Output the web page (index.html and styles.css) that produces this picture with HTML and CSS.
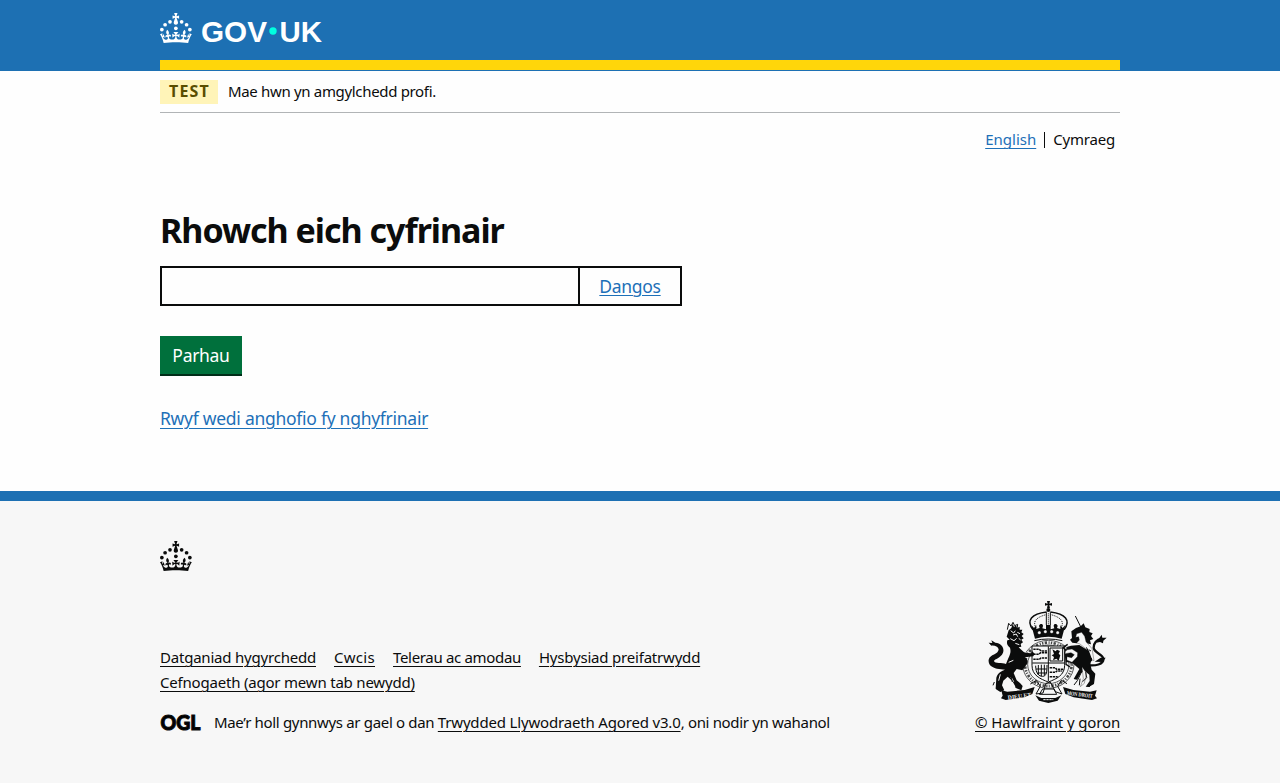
FILE: index.html
```html
<!DOCTYPE html>
<html lang="cy">
<head>
<meta charset="utf-8">
<title>Rhowch eich cyfrinair</title>
<link rel="stylesheet" href="styles.css">
</head>
<body>
<svg class="defs" width="0" height="0" aria-hidden="true">
  <symbol id="crown" viewBox="0 0 64 60">
    <circle cx="20" cy="17.6" r="3.7"/><circle cx="10.2" cy="23.5" r="3.7"/><circle cx="3.7" cy="33.2" r="3.7"/><circle cx="31.7" cy="30.6" r="3.7"/><circle cx="43.3" cy="17.6" r="3.7"/><circle cx="53.2" cy="23.5" r="3.7"/><circle cx="59.7" cy="33.2" r="3.7"/>
    <path d="M33.1,9.8c.2-.1.3-.3.5-.5l4.6,2.4v-6.8l-4.6,1.5c-.1-.2-.3-.3-.5-.5l1.9-5.9h-6.7l1.9,5.9c-.2.1-.3.3-.5.5l-4.6-1.5v6.8l4.6-2.4c.1.2.3.3.5.5l-2.6,8c-.9,2.8,1.2,5.7,4.1,5.7h0c3,0,5.1-2.9,4.1-5.7l-2.6-8ZM37,37.9s-3.4,3.8-4.1,6.1c2.2,0,4.2-.5,6.4-2.8l-.7,8.5c-2-2.8-4.4-4.1-5.7-3.8.1,3.1.5,6.7,5.8,7.2,3.7.3,6.7-1.5,7-3.8.4-2.6-2-4.3-3.7-1.6-1.4-4.5,2.4-6.1,4.9-3.2-1.9-4.5-1.8-7.7,2.4-10.9,3,4,2.6,7.3-1.2,11.1,2.4-1.3,6.2,0,4,4.6-1.2-2.8-3.7-2.2-4.2.2-.3,1.7.7,3.7,3,4.2,1.9.3,4.7-.9,7-5.9-1.3,0-2.4.7-3.9,1.7l2.4-8c.6,2.3,1.4,3.7,2.2,4.5.6-1.6.5-2.8,0-5.3l5,1.8c-2.6,3.6-5.2,8.7-7.3,17.5-7.4-1.1-15.7-1.7-24.5-1.7h0c-8.8,0-17.1.6-24.5,1.7-2.1-8.9-4.7-13.9-7.3-17.5l5-1.8c-.5,2.5-.6,3.7,0,5.3.8-.8,1.6-2.3,2.2-4.5l2.4,8c-1.5-1-2.6-1.7-3.9-1.7,2.3,5,5.2,6.2,7,5.9,2.3-.4,3.3-2.4,3-4.2-.5-2.4-3-3.1-4.2-.2-2.2-4.6,1.6-6,4-4.6-3.7-3.7-4.2-7.1-1.2-11.1,4.2,3.2,4.3,6.4,2.4,10.9,2.5-2.8,6.3-1.3,4.9,3.2-1.8-2.7-4.1-1-3.7,1.6.3,2.3,3.3,4.1,7,3.8,5.4-.5,5.7-4.2,5.8-7.2-1.3-.2-3.7,1-5.7,3.8l-.7-8.5c2.2,2.3,4.2,2.7,6.4,2.8-.7-2.3-4.1-6.1-4.1-6.1h10.6Z"/>
  </symbol>
</svg>

<header class="header">
  <div class="container header-bar">
    <svg class="logo" viewBox="0 0 162 30" role="img" aria-label="GOV.UK">
      <use href="#crown" width="32" height="30"/>
      <text class="logo-text" x="41" y="28.7" textLength="66" lengthAdjust="spacingAndGlyphs">GOV</text>
      <circle class="logo-dot" cx="113" cy="18" r="3.7"/>
      <text class="logo-text" x="119.5" y="28.7" textLength="42.5" lengthAdjust="spacingAndGlyphs">UK</text>
    </svg>
  </div>
</header>

<div class="page">
  <div class="container">
    <div class="phase">
      <strong class="tag">TEST</strong>
      <span class="phase-text">Mae hwn yn amgylchedd profi.</span>
    </div>
    <nav class="languages">
      <a class="link lang-en" href="#">English</a>
      <span class="lang-cy">Cymraeg</span>
    </nav>
    <main class="main">
      <h1 class="title"><label for="password">Rhowch eich cyfrinair</label></h1>
      <div class="password">
        <input class="password-input" id="password" type="password">
        <button class="password-show" type="button">Dangos</button>
      </div>
      <button class="submit" type="submit">Parhau</button>
      <p class="forgot"><a class="link" href="#">Rwyf wedi anghofio fy nghyfrinair</a></p>
    </main>
  </div>
</div>

<footer class="footer">
  <div class="container">
    <svg class="footer-crown" viewBox="0 0 32 30"><use href="#crown" width="32" height="30"/></svg>
    <div class="footer-meta">
      <div class="footer-left">
        <ul class="footer-links">
          <li><a class="flink f1" href="#">Datganiad hygyrchedd</a></li>
          <li><a class="flink f2" href="#">Cwcis</a></li>
          <li><a class="flink f3" href="#">Telerau ac amodau</a></li>
          <li><a class="flink f4" href="#">Hysbysiad preifatrwydd</a></li>
          <li><a class="flink f5" href="#">Cefnogaeth (agor mewn tab newydd)</a></li>
        </ul>
        <div class="licence">
          <svg class="ogl" viewBox="0 0 41 17"><text class="ogl-text" x="0.5" y="16" textLength="40" lengthAdjust="spacingAndGlyphs">OGL</text></svg>
          <span class="licence-text">Mae’r holl gynnwys ar gael o dan <a class="flink licence-link" href="#">Trwydded Llywodraeth Agored v3.0</a>, oni nodir yn wahanol</span>
        </div>
      </div>
      <div class="copyright">
        <svg class="crest" viewBox="-15 18 435 306" aria-hidden="true">
          <!-- royal crown -->
          <path d="M201 18h9l-2 8 8-2v8l-8-2 2 10h-9l2-10-8 2v-8l8 2z"/>
          <circle cx="205" cy="45" r="6"/>
          <path class="line w5" d="M159 104C137 76 155 56 200 51M252 104C274 76 256 56 211 51"/>
          <path class="line w3 dots" d="M168 98C156 78 172 66 198 59M243 98C255 78 239 66 213 59"/>
          <path class="line w3" d="M199 52v38M211 52v38"/>
          <path class="line w3 dots" d="M205 55v35"/>
          <path d="M154 90l8 9 7-8v11l10-3-2-6c2-8 12-8 12 0l-2 7 11 3v-13h14v13l11-3-2-7c0-8 10-8 12 0l-2 6 10 3v-11l7 8 8-9-11 41q-40-11-80 0z"/>
          <g class="pale"><circle cx="178" cy="113" r="5"/><circle cx="196" cy="110" r="5"/><circle cx="215" cy="110" r="5"/><circle cx="233" cy="113" r="5"/></g>
          <path class="line w3" d="M163 137q42-10 84 0"/>
          <!-- garter and shield -->
          <ellipse class="line w2" cx="205" cy="208" rx="77" ry="72"/>
          <ellipse class="line w7 garter" cx="205" cy="208" rx="70" ry="65"/>
          <ellipse class="line w2" cx="205" cy="208" rx="62" ry="58"/>
          <path class="shield" d="M156 153h98v58c0 30-25 41-49 50-24-9-49-20-49-50z"/>
          <path class="line w3" d="M205 154v104M157 204h96"/>
          <path class="line w5 rough" d="M160 163h18l5 5h19M160 178h16l6-5h20M160 193h18l5-4h18M209 218h16l5 5h20M209 232h17l5-4h16M209 245h24"/>
          <path class="line w3" d="M210 159h38v39h-38z"/>
          <path d="M217 163l10 6 4-5 9 4-4 8 5 5-5 16-7-6-10 5 3-10-7-5 7-4z"/>
          <path class="line w3" d="M167 212c0 24 10 32 21 32s13-12 13-34M175 210v30M184 209v35M193 209v32M168 222h32M172 234h28"/>
          <!-- lion -->
          <path d="M86 106l8-7 4-13 4 10 6-5 3 8 8-4v9l8 0-3 8 7 5-6 6 6 7-7 4 5 8-7 5 2 8-8 2c8 6 12 15 22 17l16 1 2-7 8 8-4 8-26 3c9 5 11 12 7 20l-14 19-17-4-9 12 9 22 10 8 8 9-4 13-15-6-12-22-14-13-13 12-4 14 7 15-12 5-14-9 2-34c4-16 17-20 26-24l-24-3c-16-3-27-12-25-27 4-17 29-14 30-31-3-9-11-12-22-11l-8-9 11 1-3-8 12 7c18 2 28 15 23 30-7 17-25 18-27 25 2 9 25 4 36 9 8-23 17-31 12-49-8-5-11-13-8-22l7-2-9-9z"/>
          <g class="line pale-line w3"><path d="M92 107l9 7 5-7M99 120l10-3 4 8M91 131l11 6 8-7M112 112l8 4M116 130l6 5M106 145l12 4M86 202l14-6M62 195l20-3M93 246l8 14M61 238l-5 19"/></g>
          <path class="line w3" d="M82 104l4-19 7 8 6-11 5 10 9-4-2 13M43 261l-4 10M52 264l-3 13M111 265l-4 13M92 235l5 26"/>
          <!-- unicorn -->
          <path class="line w3" d="M286 63l18 36"/>
          <path d="M274 109l14-10 14-5 9-9 5 12 13 5-1 9 10 4-5 8 7 9-10 4 3 12-14-3 4 11-11-6-9-13-13 8-13-2-7-9 6-5z"/>
          <path class="pale" d="M290 116l15-4 9 12 4 16 18 21 6 36-14-7-7-26-21-17-10-3 8-9-2-10-9 2z"/>
          <path d="M273 152l25-2 29 18 10 28-7 7 5 21 11 12-4 31-16 9-9-1 12-17-1-19-14-11-11 6-12 20-10-2 17-30-20-17-21-5-4-28 9-17z"/>
          <path class="pale" d="M257 165l-2 11 18-3 10 6-8 9-14-3-1 10 16 7 16-17 1-12-17-11zM306 215l13 19-6 31-12 10 9-24z"/>
          <path class="line w4" d="M263 148l-14 10 10 9M259 185l-1 23 12 8"/>
          <path class="line w6" d="M328 211c15 1 44-1 42-20-3-16-28-16-29-33 0-14 10-24 25-28"/>
          <path d="M358 129l7-10 2 9 13 0-10 9-1 8-9-4-11 2zM344 200l18-12 15 0-9 13z"/>
          <path class="line w3" d="M319 157l7 13-3 15 8 15-4 19-10 13 3 16-12 12M326 164l7 4M329 188l7 3"/>
          <path class="line w3" d="M305 230l-13 27-10 13M342 239l-6 25-9 12M300 251l-2 20"/>
          <!-- motto -->
          <path d="M64 286l18 4 52-5 30-9-7 21-24 10-56 8-14-5 5-8zM350 286l-20 4-50-5-31-9 7 21 25 10 55 8 15-5-6-8z"/>
          <path class="line w3" d="M151 267l18-11 12 18-13 23 21-3 9-29 13-4 15 29 20 7-13-23 11-18 17 10M178 298h52l-8-16h-34z"/>
          <path d="M166 301l18 8h42l18-8-11 16-28 7-28-7z"/>
          <g class="motto"><text x="83" y="309" textLength="70" transform="rotate(-7 120 302)">DIEU ET</text><text x="260" y="304" textLength="78" lengthAdjust="spacingAndGlyphs" transform="rotate(7 298 302)">MON DROIT</text></g>
          <path class="line pale-line w3 rough" d="M190 314h30"/>
        </svg>
        <a class="flink copy-link" href="#">© Hawlfraint y goron</a>
      </div>
    </div>
  </div>
</footer>
</body>
</html>
```
FILE: styles.css
```css
* { box-sizing: border-box; }
body {
  margin: 0;
  background: #f7f7f7;
  color: #0b0c0c;
  font-family: "Noto Sans", "Open Sans", sans-serif;
  font-size: 15px;
  line-height: 20px;
  letter-spacing: -0.33px;
}
.defs { display: block; }
.container { width: 960px; margin: 0 auto; }

.header { height: 71px; background: #1d70b3; }
.header-bar { height: 70px; padding-top: 13px; border-bottom: 10px solid #ffd60a; }
.logo { display: block; width: 162px; height: 30px; fill: #fff; overflow: visible; }
.logo-text { font: bold 30px "Liberation Sans", Arial, sans-serif; letter-spacing: 0; }
.logo-dot { fill: #00ffe0; }

.page { height: 420px; background: #fefefe; }
.phase {
  display: flex;
  align-items: center;
  height: 42px;
  border-bottom: 1px solid #b1b4b6;
}
.tag {
  width: 58px;
  height: 24px;
  margin-right: 10px;
  padding-left: 1px;
  background: #fff4b8;
  color: #594d00;
  font-size: 16px;
  line-height: 23px;
  text-align: center;
  letter-spacing: 1.2px;
}
.phase-text { padding-bottom: 2px; }
.languages { display: flex; justify-content: flex-end; height: 20px; margin-top: 16px; padding-right: 5px; line-height: 20px; }
.link { color: #1d70b8; text-decoration: underline; text-decoration-thickness: 1px; text-underline-offset: 3px; }
.lang-en { letter-spacing: 0; }
.lang-cy { height: 16px; margin: 3px 0 0 8px; padding-left: 8px; border-left: 1px solid #0b0c0c; line-height: 14px; letter-spacing: -0.2px; }

.main { padding-top: 61px; }
.title { margin: 0; font-size: 34px; line-height: 40px; letter-spacing: -1px; }
.password { display: flex; width: 522px; height: 40px; margin-top: 16px; }
.password-input { width: 420px; border: 2px solid #0b0c0c; background: #fefefe; }
.password-show {
  width: 104px;
  margin-left: -2px;
  padding: 0;
  border: 2px solid #0b0c0c;
  background: #fefefe;
  color: #1d70b8;
  font: inherit;
  font-size: 17.5px;
  letter-spacing: -0.3px;
  text-decoration: underline;
  text-decoration-thickness: 1px;
  text-underline-offset: 2px;
}
.submit {
  display: block;
  width: 82px;
  height: 40px;
  margin-top: 30px;
  padding: 0;
  border: 0;
  border-bottom: 2px solid #002d18;
  background: #00703c;
  color: #fff;
  font: inherit;
  font-size: 17.5px;
  letter-spacing: -0.3px;
}
.forgot { margin: 30px 0 0; font-size: 17.5px; line-height: 25px; letter-spacing: -0.27px; }

.footer { height: 292px; border-top: 10px solid #1d70b3; background: #f7f7f7; }
.footer .container { padding-top: 40px; }
.footer-crown { display: block; width: 32px; height: 30px; fill: #0b0c0c; }
.footer-meta { display: flex; justify-content: space-between; align-items: flex-end; margin-top: 30px; }
.footer-links { display: flex; flex-wrap: wrap; column-gap: 18px; width: 640px; margin: 0 0 15px; padding: 0; list-style: none; line-height: 25px; }
.flink { color: inherit; text-decoration: underline; text-decoration-thickness: 1px; text-underline-offset: 3px; }
.f1 { letter-spacing: -0.21px; }
.f2 { letter-spacing: 0.3px; }
.f4 { letter-spacing: -0.2px; }
.f5 { letter-spacing: -0.2px; }
.licence-link { letter-spacing: -0.17px; }
.licence { display: flex; align-items: center; line-height: 25px; white-space: nowrap; }
.ogl { width: 41px; height: 17px; margin-right: 13px; overflow: visible; }
.ogl-text { font: 900 21.5px Lato, sans-serif; letter-spacing: 0; stroke: #0b0c0c; stroke-width: 1.1; }
.copyright { width: 145px; text-align: right; line-height: 25px; white-space: nowrap; }
.crest { display: block; width: 145px; height: 102px; margin-bottom: 7px; fill: #0b0c0c; }
.copy-link { display: block; letter-spacing: -0.12px; }

.line { fill: none; stroke: #0b0c0c; }
.w2 { stroke-width: 2; }
.w3 { stroke-width: 3; }
.w4 { stroke-width: 4; }
.w5 { stroke-width: 4.5; }
.w6 { stroke-width: 7; }
.w7 { stroke-width: 8; }
.dots { stroke-dasharray: 3 3; }
.garter { stroke-dasharray: 4 4 7 5 3 4; opacity: 0.75; }
.rough { stroke-dasharray: 7 2; }
.shield { fill: #f7f7f7; stroke: #0b0c0c; stroke-width: 3; }
.pale { fill: #f7f7f7; stroke: #0b0c0c; stroke-width: 1; }
.pale-line { stroke: #f7f7f7; }
.motto { fill: #f7f7f7; font: bold 17px "Liberation Serif", serif; letter-spacing: 0; }
```
